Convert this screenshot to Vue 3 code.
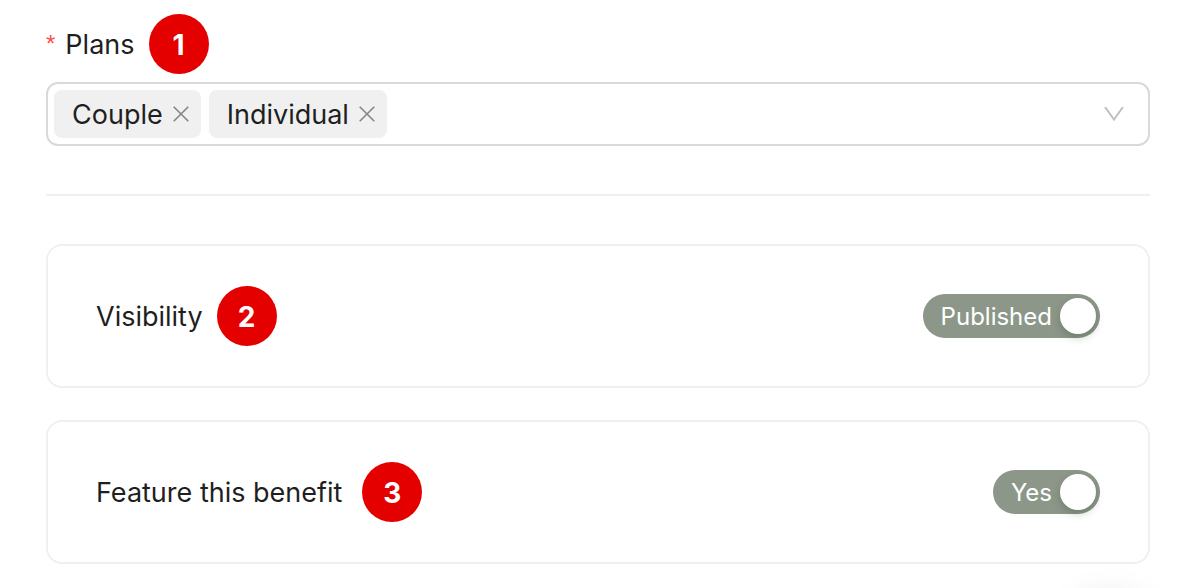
<script setup>
import { ref } from 'vue'

const plans = ref(['Couple', 'Individual'])
const published = ref(true)
const featured = ref(true)

function removePlan(plan) {
  plans.value = plans.value.filter((item) => item !== plan)
}
</script>

<template>
  <main class="page">
    <form class="form" @submit.prevent>
      <div class="field">
        <div class="field-head">
          <label class="label" for="plans"><span class="required">*</span>Plans</label>
          <span class="step">1</span>
        </div>
        <div class="select">
          <span v-for="plan in plans" :key="plan" class="tag">
            <span class="tag-text">{{ plan }}</span>
            <button type="button" class="remove" :aria-label="`Remove ${plan}`" @click="removePlan(plan)">
              <svg viewBox="0 0 16 16" width="16" height="16"><path d="M0.7 0.7L15.3 15.3M15.3 0.7L0.7 15.3" /></svg>
            </button>
          </span>
          <input id="plans" class="search" type="text" role="combobox" aria-expanded="false" autocomplete="off" />
          <svg class="arrow" viewBox="0 0 20 14" width="20" height="14"><path d="M1 0L10 12.5L19 0" /></svg>
        </div>
      </div>

      <hr class="divider" />

      <section class="card">
        <label class="label" for="visibility">Visibility</label>
        <span class="step">2</span>
        <label class="switch">
          <input id="visibility" v-model="published" class="switch-input" type="checkbox" role="switch" />
          <span class="switch-text">{{ published ? 'Published' : 'Draft' }}</span>
          <span class="knob"></span>
        </label>
      </section>

      <section class="card card-wide">
        <label class="label" for="featured">Feature this benefit</label>
        <span class="step">3</span>
        <label class="switch">
          <input id="featured" v-model="featured" class="switch-input" type="checkbox" role="switch" />
          <span class="switch-text">{{ featured ? 'Yes' : 'No' }}</span>
          <span class="knob"></span>
        </label>
      </section>
    </form>
  </main>
</template>

<style>
body {
  background: #fff;
}
</style>

<style scoped>
.page {
  box-sizing: border-box;
  padding: 14px 42px 24px 46px;
  font-family: Inter, "Liberation Sans", sans-serif;
  font-size: 27px;
  line-height: 44px;
  color: #1f1f1f;
}
/* Soft glow of the floating widget docked below the window edge */
.page::after {
  content: "";
  position: fixed;
  right: 32px;
  bottom: -104px;
  width: 100px;
  height: 100px;
  border-radius: 50%;
  box-shadow: 0 0 32px rgba(0, 0, 0, 0.08);
}
.form {
  display: flex;
  flex-direction: column;
}
.field {
  display: flex;
  flex-direction: column;
  gap: 8px;
}
.field-head {
  display: flex;
  align-items: center;
  gap: 14px;
}
.label,
.step,
.tag-text,
.switch-text {
  box-sizing: border-box;
  padding-top: 2px;
  white-space: nowrap;
}
.required {
  margin-right: 10px;
  font-family: "Liberation Sans", sans-serif;
  font-size: 24px;
  vertical-align: 2px;
  line-height: 1;
  color: #ff4d4f;
}
.step {
  display: flex;
  flex: none;
  align-items: center;
  justify-content: center;
  width: 60px;
  height: 60px;
  border-radius: 50%;
  background: #e50000;
  color: #fff;
  font-size: 28px;
  font-weight: 700;
}
.select {
  display: flex;
  align-items: center;
  gap: 8px;
  padding: 6px 24px 6px 6px;
  border: 2px solid #d9d9d9;
  border-radius: 12px;
}
.tag {
  display: flex;
  align-items: center;
  gap: 10px;
  height: 48px;
  padding: 0 12px 0 18px;
  border-radius: 8px;
  background: #f0f0f0;
}
.remove {
  display: flex;
  padding: 0;
  border: 0;
  background: none;
  cursor: pointer;
}
.remove svg {
  fill: none;
  stroke: #858585;
  stroke-width: 1.6;
}
.search {
  flex: 1;
  min-width: 0;
  padding: 0;
  border: 0;
  outline: 0;
  background: none;
  font: inherit;
}
.arrow {
  flex: none;
  fill: none;
  stroke: #bfbfbf;
  stroke-width: 2;
}
.divider {
  width: 100%;
  height: 2px;
  margin: 48px 0;
  border: 0;
  background: #f0f0f0;
}
.card {
  display: flex;
  align-items: center;
  gap: 14px;
  padding: 40px 48px;
  border: 2px solid #f0f0f0;
  border-radius: 16px;
}
.card-wide {
  gap: 20px;
}
.card + .card {
  margin-top: 32px;
}
.switch {
  display: flex;
  align-items: center;
  gap: 8px;
  height: 44px;
  margin-left: auto;
  padding: 0 4px 0 18px;
  border-radius: 22px;
  background: #8c9789;
  color: #fff;
  font-size: 24px;
  cursor: pointer;
}
.switch:not(:has(:checked)) {
  flex-direction: row-reverse;
  padding: 0 18px 0 4px;
  background: #bfbfbf;
}
.switch-input {
  position: absolute;
  opacity: 0;
}
.knob {
  width: 36px;
  height: 36px;
  border-radius: 50%;
  background: #fff;
  box-shadow: 0 4px 8px rgba(0, 35, 11, 0.2);
}
</style>
